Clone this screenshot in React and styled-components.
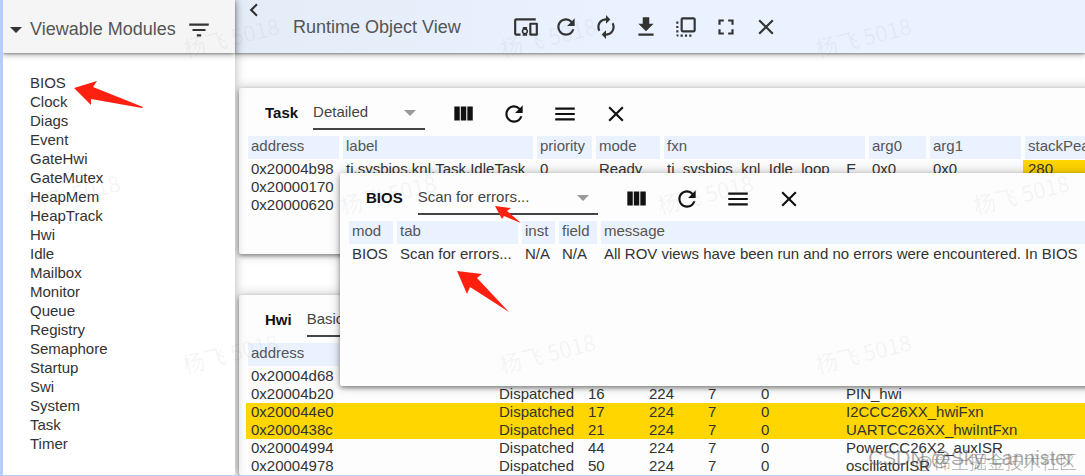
import React from "react";
import styled, { createGlobalStyle, css } from "styled-components";
import {
  MdAutorenew,
  MdChevronLeft,
  MdClose,
  MdDevicesOther,
  MdFileDownload,
  MdFilterList,
  MdFlipToFront,
  MdFullscreen,
  MdMenu,
  MdRefresh,
} from "react-icons/md";

const ICON_SIZE = 26;

const modules = [
  "BIOS",
  "Clock",
  "Diags",
  "Event",
  "GateHwi",
  "GateMutex",
  "HeapMem",
  "HeapTrack",
  "Hwi",
  "Idle",
  "Mailbox",
  "Monitor",
  "Queue",
  "Registry",
  "Semaphore",
  "Startup",
  "Swi",
  "System",
  "Task",
  "Timer",
];

const toolbarActions = [
  { label: "Connect", Icon: MdDevicesOther },
  { label: "Refresh", Icon: MdRefresh },
  { label: "Auto refresh", Icon: MdAutorenew },
  { label: "Download", Icon: MdFileDownload },
  { label: "Bring to front", Icon: MdFlipToFront },
  { label: "Full screen", Icon: MdFullscreen },
  { label: "Close", Icon: MdClose },
];

const taskColumns = [
  { name: "address", width: 95 },
  { name: "label", width: 194 },
  { name: "priority", width: 59 },
  { name: "mode", width: 68 },
  { name: "fxn", width: 205 },
  { name: "arg0", width: 61 },
  { name: "arg1", width: 95 },
  { name: "stackPeak", width: 95 },
];

const taskRows = [
  {
    cells: [
      "0x20004b98",
      "ti.sysbios.knl.Task.IdleTask",
      "0",
      "Ready",
      "ti_sysbios_knl_Idle_loop__E",
      "0x0",
      "0x0",
      "280",
    ],
    flagged: [7],
  },
  { cells: ["0x20000170", "", "", "", "", "", "", ""] },
  { cells: ["0x20000620", "", "", "", "", "", "", ""] },
];

const hwiColumns = [
  { name: "address", width: 95 },
  { name: "label", width: 153 },
  { name: "type", width: 89 },
  { name: "intNum", width: 61 },
  { name: "priority", width: 59 },
  { name: "group", width: 53 },
  { name: "subPri", width: 85 },
  { name: "fxn", width: 277 },
];

const hwiRows = [
  { cells: ["0x20004d68", "", "", "", "", "", "", ""] },
  { cells: ["0x20004b20", "", "Dispatched", "16", "224", "7", "0", "PIN_hwi"] },
  {
    cells: ["0x200044e0", "", "Dispatched", "17", "224", "7", "0", "I2CCC26XX_hwiFxn"],
    isFlagged: true,
  },
  {
    cells: ["0x2000438c", "", "Dispatched", "21", "224", "7", "0", "UARTCC26XX_hwiIntFxn"],
    isFlagged: true,
  },
  {
    cells: ["0x20004994", "", "Dispatched", "44", "224", "7", "0", "PowerCC26X2_auxISR"],
  },
  {
    cells: ["0x20004978", "", "Dispatched", "50", "224", "7", "0", "oscillatorISR"],
  },
];

const biosColumns = [
  { name: "mod", width: 48 },
  { name: "tab", width: 125 },
  { name: "inst", width: 37 },
  { name: "field", width: 42 },
  { name: "message", width: 520 },
];

const biosRows = [
  {
    cells: [
      "BIOS",
      "Scan for errors...",
      "N/A",
      "N/A",
      "All ROV views have been run and no errors were encountered. In BIOS",
    ],
  },
];

const stamps = [
  [231, 36],
  [548, 36],
  [863, 36],
  [72, 193],
  [388, 193],
  [705, 193],
  [1021, 193],
  [230, 352],
  [547, 352],
  [863, 352],
];

const arrows = [
  "74,88 97,81 93,87 143,107 142,108 91,99 91,105",
  "495,206 511,208 507,211 521,223 504,216 502,219",
  "457,271 482,274 477,278 509,312 470,287 467,294",
];

const GlobalStyle = createGlobalStyle`
  * {
    box-sizing: border-box;
  }

  body {
    margin: 0;
    font-family: "Liberation Sans", Arial, "Noto Sans CJK SC", sans-serif;
    font-size: 15px;
    color: #333;
  }
`;

const Page = styled.div`
  position: relative;
  display: flex;
  height: 100vh;
  overflow: hidden;
  background-color: #fff;
  border-left: 3px solid #b8ccff;
  border-bottom: 1px solid #b8ccff;
`;

const barShadow = css`
  box-shadow: 0 1px 2px rgba(0, 0, 0, 0.3), 0 2px 6px rgba(0, 0, 0, 0.3);
`;

const Sidebar = styled.aside`
  position: relative;
  z-index: 1;
  flex: none;
  width: 232px;
  background-color: #fff;
  box-shadow: 0 0 10px rgba(0, 0, 0, 0.3);
`;

const SidebarHeader = styled.header`
  display: flex;
  align-items: center;
  height: 53px;
  padding: 6px 0 0 7px;
  background-color: #f5f5f5;
  ${barShadow}
`;

const SidebarTitle = styled.h2`
  margin: 0 10px 0 8px;
  font-size: 18px;
  font-weight: normal;
  color: #555;
`;

const ModuleList = styled.ul`
  margin: 0;
  padding: 20px 0 0 27px;
  list-style: none;
`;

const ModuleLink = styled.a`
  display: block;
  line-height: 19px;
  color: #333;
  text-decoration: none;
`;

const Main = styled.main`
  flex: 1;
  min-width: 0;
  overflow: hidden;
`;

const MainHeader = styled.header`
  display: flex;
  align-items: center;
  height: 53px;
  padding-left: 6px;
  background: linear-gradient(to right, #e4ecf8, #eaf2ff 45%);
  color: #333;
  ${barShadow}
`;

const MainTitle = styled.h1`
  margin: 2px 52px 0 26px;
  font-size: 18px;
  font-weight: normal;
  color: #555;
`;

const IconButton = styled.button`
  display: flex;
  flex: none;
  padding: 0;
  border: none;
  background-color: transparent;
  color: inherit;
  cursor: pointer;
`;

const BackButton = styled(IconButton)`
  align-self: flex-start;
  margin-top: -3px;
`;

const Actions = styled.div`
  display: flex;
  flex: none;
  gap: ${({ $gap }) => $gap}px;
`;

const Cards = styled.div`
  display: flex;
  flex-direction: column;
  gap: 41px;
  padding: 35px 0 0 4px;
`;

const Card = styled.section`
  width: max-content;
  min-width: 100%;
  min-height: 166px;
  border-radius: 2px;
  background-color: #fdfdfd;
  box-shadow: 0 2px 4px rgba(0, 0, 0, 0.4), 0 0 12px rgba(0, 0, 0, 0.25);
`;

const FloatingCard = styled(Card)`
  position: absolute;
  z-index: 2;
  top: 173px;
  left: 337px;
  min-height: 213px;
`;

const CardHeader = styled.header`
  display: flex;
  align-items: center;
  height: 48px;
  padding: 4px 0 0 26px;
  color: #111;
`;

const CardTitle = styled.h3`
  margin: 0 15px 3px 0;
  font-size: 15px;
  font-weight: bold;
`;

const SelectBox = styled.div`
  position: relative;
  width: ${({ $width }) => $width}px;
  margin-right: 25px;

  svg {
    position: absolute;
    top: 12px;
    right: 9px;
    color: #999;
    pointer-events: none;
  }
`;

const Select = styled.select`
  width: 100%;
  height: 32px;
  padding: 0 0 3px;
  border: none;
  border-bottom: 2px solid #444;
  border-radius: 0;
  appearance: none;
  background-color: transparent;
  font: inherit;
  color: #444;
`;

const Table = styled.table`
  margin-left: 7px;
  table-layout: fixed;
  border-collapse: separate;
  border-spacing: 0;
  width: ${({ $width }) => $width}px;
`;

const HeadCell = styled.th`
  width: ${({ $width }) => $width}px;
  height: 24px;
  padding: 0 3px 3px;
  border: solid #fdfdfd;
  border-width: 0 2px 1px;
  background-color: #eaf2ff;
  font-weight: normal;
  line-height: 20px;
  text-align: left;
  color: #555;
`;

const Row = styled.tr`
  background-color: ${({ $isFlagged }) => ($isFlagged ? "#ffd600" : "transparent")};
`;

const Cell = styled.td`
  height: 18px;
  padding: 0 0 0 5px;
  line-height: 18px;
  white-space: nowrap;
  background-color: ${({ $isFlagged }) => ($isFlagged ? "#ffd600" : "transparent")};
`;

const Overlay = styled.div`
  position: absolute;
  z-index: 3;
  inset: 0 0 0 -3px;
  overflow: hidden;
  pointer-events: none;
`;

const Stamp = styled.span`
  position: absolute;
  top: ${({ $y }) => $y}px;
  left: ${({ $x }) => $x}px;
  font-family: "Noto Sans CJK SC", sans-serif;
  font-size: 22px;
  line-height: 24px;
  white-space: nowrap;
  color: rgba(90, 110, 130, 0.07);
  transform: translate(-50%, -50%) rotate(-14deg);
`;

const Arrows = styled.svg`
  position: absolute;
  top: 0;
  left: 0;
  fill: #ff2010;
`;

const Credit = styled.span`
  position: absolute;
  right: ${({ $right }) => $right}px;
  bottom: ${({ $bottom }) => $bottom}px;
  font-family: "Liberation Sans", "Noto Sans CJK SC", sans-serif;
  font-size: ${({ $size }) => $size}px;
  font-weight: 300;
  line-height: 24px;
  white-space: nowrap;
  color: rgba(90, 90, 90, 0.5);
`;

function Caret({ size = 12 }) {
  return (
    <svg width={size} height={size / 2} viewBox="0 0 12 6" fill="currentColor" aria-hidden="true">
      <path d="M0 0h12L6 6z" />
    </svg>
  );
}

function ColumnsIcon() {
  return (
    <svg width={ICON_SIZE} height={ICON_SIZE} viewBox="0 0 24 24" fill="currentColor">
      <path d="M10 18h5V5h-5v13zm-6 0h5V5H4v13zM16 5v13h5V5h-5z" />
    </svg>
  );
}

function DataTable({ columns, rows }) {
  const width = columns.reduce((sum, column) => sum + column.width, 0);
  return (
    <Table $width={width}>
      <thead>
        <tr>
          {columns.map(({ name, width }) => (
            <HeadCell key={name} scope="col" $width={width}>
              {name}
            </HeadCell>
          ))}
        </tr>
      </thead>
      <tbody>
        {rows.map(({ cells, isFlagged, flagged = [] }) => (
          <Row key={cells[0]} $isFlagged={isFlagged}>
            {cells.map((cell, index) => (
              <Cell key={columns[index].name} $isFlagged={flagged.includes(index)}>
                {cell}
              </Cell>
            ))}
          </Row>
        ))}
      </tbody>
    </Table>
  );
}

function ModuleView({ as: Wrapper = Card, title, view, selectWidth, columns, rows }) {
  return (
    <Wrapper>
      <CardHeader>
        <CardTitle>{title}</CardTitle>
        <SelectBox $width={selectWidth}>
          <Select aria-label={`${title} view`} defaultValue={view}>
            <option>{view}</option>
          </Select>
          <Caret />
        </SelectBox>
        <Actions $gap={25}>
          <IconButton aria-label="Columns">
            <ColumnsIcon />
          </IconButton>
          <IconButton aria-label="Refresh">
            <MdRefresh size={ICON_SIZE} />
          </IconButton>
          <IconButton aria-label="Menu">
            <MdMenu size={ICON_SIZE} />
          </IconButton>
          <IconButton aria-label="Close">
            <MdClose size={ICON_SIZE} />
          </IconButton>
        </Actions>
      </CardHeader>
      <DataTable columns={columns} rows={rows} />
    </Wrapper>
  );
}

function App() {
  return (
    <Page>
      <GlobalStyle />
      <Sidebar>
        <SidebarHeader>
          <Caret />
          <SidebarTitle>Viewable Modules</SidebarTitle>
          <IconButton aria-label="Filter">
            <MdFilterList size={ICON_SIZE} />
          </IconButton>
        </SidebarHeader>
        <ModuleList>
          {modules.map((name) => (
            <li key={name}>
              <ModuleLink href={`#${name}`}>{name}</ModuleLink>
            </li>
          ))}
        </ModuleList>
      </Sidebar>
      <Main>
        <MainHeader>
          <BackButton aria-label="Back">
            <MdChevronLeft size={ICON_SIZE} />
          </BackButton>
          <MainTitle>Runtime Object View</MainTitle>
          <Actions $gap={14}>
            {toolbarActions.map(({ label, Icon }) => (
              <IconButton key={label} aria-label={label}>
                <Icon size={ICON_SIZE} />
              </IconButton>
            ))}
          </Actions>
        </MainHeader>
        <Cards>
          <ModuleView
            title="Task"
            view="Detailed"
            selectWidth={112}
            columns={taskColumns}
            rows={taskRows}
          />
          <ModuleView
            title="Hwi"
            view="Basic"
            selectWidth={112}
            columns={hwiColumns}
            rows={hwiRows}
          />
        </Cards>
      </Main>
      <ModuleView
        as={FloatingCard}
        title="BIOS"
        view="Scan for errors..."
        selectWidth={180}
        columns={biosColumns}
        rows={biosRows}
      />
      <Overlay>
        {stamps.map(([x, y]) => (
          <Stamp key={`${x}-${y}`} $x={x} $y={y}>
            杨飞 5018
          </Stamp>
        ))}
        <Arrows width="560" height="340" aria-hidden="true">
          {arrows.map((points) => (
            <polygon key={points} points={points} />
          ))}
        </Arrows>
        <Credit $right={12} $bottom={5} $size={20}>
          CSDN @Sky-Lannister
        </Credit>
        <Credit $right={8} $bottom={0} $size={18}>
          @稀土掘金技术社区
        </Credit>
      </Overlay>
    </Page>
  );
}

export default App;
